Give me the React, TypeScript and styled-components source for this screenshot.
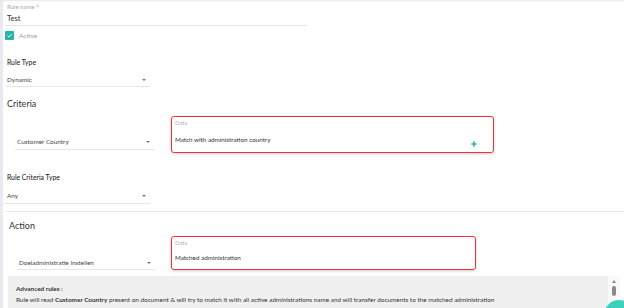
import React from "react";
import styled, { createGlobalStyle } from "styled-components";

const Global = createGlobalStyle`
  html, body { margin: 0; padding: 0; background: #fff; }
  body { font-family: Lato, "Open Sans", sans-serif; color: #333; overflow: hidden; }
  * { box-sizing: border-box; }
`;

const Page = styled.div`
  position: relative;
  width: 624px;
  height: 308px;
  overflow: hidden;
  border-left: 3px solid #e9eaf0;
  box-shadow: inset 0 2px 2px -1px #e6e6e6;
  padding: 2px 0 0 2px;
  display: flex;
  flex-direction: column;
`;

const NameField = styled.div`
  width: 302px;
  display: flex;
  flex-direction: column;
`;

const TinyLabel = styled.div`
  font-size: 6px;
  line-height: 10px;
  color: #a8a8a8;
  padding-left: 2px;
`;

const Star = styled.span`
  color: #f44336;
  margin-left: 2px;
`;

const NameValue = styled.div`
  font-size: 7.5px;
  line-height: 12px;
  padding: 1px 0 0 2px;
  border-bottom: 1px solid #e3e3e3;
  color: #333;
`;

const CheckRow = styled.div`
  margin-top: 5px;
  display: flex;
  align-items: center;
  gap: 5px;
  height: 8px;
`;

const Box = styled.span`
  width: 9px;
  height: 9px;
  border-radius: 1px;
  background: #27b5a6;
  display: inline-flex;
  align-items: center;
  justify-content: center;
`;

const CheckText = styled.span`
  font-size: 6.5px;
  color: #a0a0a0;
`;

const FieldTitle = styled.div<{ $mt: number }>`
  margin-top: ${(p) => p.$mt}px;
  font-size: 6.8px;
  line-height: 10px;
  color: #262626;
  -webkit-text-stroke: 0.05px #262626;
  padding-left: 2px;
`;

const Select = styled.div<{ $w: number; $ml?: number; $mt?: number; $pb?: number }>`
  width: ${(p) => p.$w}px;
  margin-left: ${(p) => p.$ml ?? 0}px;
  margin-top: ${(p) => p.$mt ?? 0}px;
  padding: 0 4px ${(p) => p.$pb ?? 1}px 2px;
  border-bottom: 1px solid #e6e6e6;
  display: flex;
  justify-content: space-between;
  align-items: center;
  font-size: 6.4px;
  line-height: 10px;
  color: #444;
`;

const Caret = styled.span`
  width: 0;
  height: 0;
  border-left: 2px solid transparent;
  border-right: 2px solid transparent;
  border-top: 2px solid #777;
`;

const SectionTitle = styled.div<{ $mt: number; $ml: number }>`
  margin-top: ${(p) => p.$mt}px;
  margin-left: ${(p) => p.$ml}px;
  font-size: 9px;
  line-height: 12px;
  color: #333;
`;

const Row = styled.div<{ $mt: number }>`
  margin-top: ${(p) => p.$mt}px;
  display: flex;
  align-items: flex-end;
`;

const SelectSlot = styled.div<{ $w: number; $pb: number }>`
  width: ${(p) => p.$w}px;
  padding-bottom: ${(p) => p.$pb}px;
  display: flex;
`;

const DataBox = styled.div<{ $w: number; $h: number }>`
  position: relative;
  width: ${(p) => p.$w}px;
  height: ${(p) => p.$h}px;
  border: 1.5px solid #f0303a;
  border-radius: 3px;
  box-shadow: 0 1px 3px rgba(0, 0, 0, 0.2);
  padding: 2px 3px;
  display: flex;
  flex-direction: column;
`;

const DataLabel = styled.div`
  font-size: 5.8px;
  line-height: 8px;
  color: #b0b0b0;
`;

const DataValue = styled.div<{ $mt: number }>`
  margin-top: ${(p) => p.$mt}px;
  font-size: 6.3px;
  line-height: 10px;
  color: #333;
`;

const PlusIcon = styled.svg`
  position: absolute;
  right: 16px;
  bottom: 5px;
`;

const Divider = styled.div`
  margin-top: 7px;
  height: 1px;
  background: #e8e8e8;
`;

const Advanced = styled.div`
  margin: 6px 0 0 3px;
  width: 612px;
  height: 40px;
  background: #f0f0f0;
  display: flex;
`;

const AdvText = styled.div`
  flex: 1;
  padding: 7px 0 0 8px;
  font-size: 6.4px;
  line-height: 11px;
  color: #333;
  white-space: nowrap;
`;

const AdvTitle = styled.div`
  font-weight: 700;
`;

const Track = styled.div`
  width: 12px;
  background: #f9f9f9;
  display: flex;
  flex-direction: column;
  align-items: center;
  padding-top: 4px;
  gap: 3px;
`;

const UpArrow = styled.span`
  width: 0;
  height: 0;
  border-left: 2px solid transparent;
  border-right: 2px solid transparent;
  border-bottom: 3px solid #888;
`;

const Thumb = styled.span`
  width: 4px;
  height: 10px;
  border-radius: 2px;
  background: #8a8a8a;
`;

const Fab = styled.div`
  position: absolute;
  right: -10px;
  bottom: -22px;
  width: 30px;
  height: 30px;
  border-radius: 50%;
  background: #3bd1bd;
`;

export default function App() {
  return (
    <>
      <Global />
      <Page>
        <NameField>
          <TinyLabel>
            Rule name<Star>*</Star>
          </TinyLabel>
          <NameValue>Test</NameValue>
        </NameField>
        <CheckRow>
          <Box>
            <svg width="7" height="7" viewBox="0 0 10 10">
              <path d="M2 5.2 L4.2 7.3 L8.2 2.8" fill="none" stroke="#fff" strokeWidth="1.3" />
            </svg>
          </Box>
          <CheckText>Active</CheckText>
        </CheckRow>

        <FieldTitle $mt={18}>Rule Type</FieldTitle>
        <Select $w={145} $mt={8}>
          Dynamic <Caret />
        </Select>

        <SectionTitle $mt={11} $ml={2}>Criteria</SectionTitle>
        <Row $mt={6}>
          <SelectSlot $w={166} $pb={3}>
            <Select $w={139} $ml={10} $pb={2}>
              Customer Country <Caret />
            </Select>
          </SelectSlot>
          <DataBox $w={323} $h={37}>
            <DataLabel>Data</DataLabel>
            <DataValue $mt={8}>Match with administration country</DataValue>
            <PlusIcon width="6" height="6" viewBox="0 0 6 6">
              <path d="M3 0.3 V5.7 M0.3 3 H5.7" stroke="#2bb9a9" strokeWidth="1.6" />
            </PlusIcon>
          </DataBox>
        </Row>

        <FieldTitle $mt={19}>Rule Criteria Type</FieldTitle>
        <Select $w={145} $mt={9} $pb={2}>
          Any <Caret />
        </Select>

        <Divider />
        <SectionTitle $mt={8} $ml={4}>Action</SectionTitle>
        <Row $mt={4}>
          <SelectSlot $w={166} $pb={0}>
            <Select $w={138} $ml={12} $pb={1}>
              Doeladministratie instellen <Caret />
            </Select>
          </SelectSlot>
          <DataBox $w={305} $h={34}>
            <DataLabel>Data</DataLabel>
            <DataValue $mt={6}>Matched administration</DataValue>
          </DataBox>
        </Row>

        <Advanced>
          <AdvText>
            <AdvTitle>Advanced rules :</AdvTitle>
            Rule will read <b>Customer Country</b> present on document &amp; will try to match it with all
            active administrations name and will transfer documents to the matched administration
          </AdvText>
          <Track>
            <UpArrow />
            <Thumb />
          </Track>
        </Advanced>
        <Fab />
      </Page>
    </>
  );
}
